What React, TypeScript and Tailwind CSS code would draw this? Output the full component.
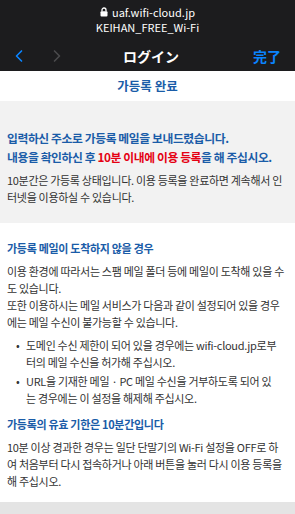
import { ChevronLeft, ChevronRight } from 'lucide-react';

const font = { fontFamily: '"Noto Sans CJK KR", "Noto Sans", sans-serif' };

function LockIcon() {
  return (
    <svg width="8" height="10" viewBox="0 0 8 10" className="text-white">
      <path d="M2 4.5V3a2 2 0 0 1 4 0v1.5" fill="none" stroke="currentColor" strokeWidth="1.3" />
      <rect x="0.5" y="4.3" width="7" height="5.2" rx="1" fill="currentColor" />
    </svg>
  );
}

export default function App() {
  return (
    <div className="w-[295px] h-[514px] overflow-hidden bg-white" style={font}>
      {/* browser chrome */}
      <div className="h-[71px] bg-[#1c1c1e] flex flex-col items-center text-white">
        <div className="mt-[5px] flex items-center gap-[4px] text-[11px] leading-[14px]">
          <LockIcon />
          <span>uaf.wifi-cloud.jp</span>
        </div>
        <div className="text-[11px] leading-[14px] mt-[1px]">KEIHAN_FREE_Wi-Fi</div>
        <div className="w-full flex items-center mt-[12px] h-[20px] px-[9px]">
          <ChevronLeft size={20} strokeWidth={2} className="text-[#0a84ff]" />
          <ChevronRight size={20} strokeWidth={2} className="text-[#4a4a4c] ml-[18px]" />
          <div className="flex-1 text-center text-[14px] font-bold pr-[18px]">ログイン</div>
          <div className="text-[14px] font-bold text-[#0a84ff] mr-[5px]">完了</div>
        </div>
      </div>

      {/* page header */}
      <div className="h-[30px] flex items-center justify-center">
        <span className="text-[12.5px] font-bold text-[#1a5ca8]">가등록 완료</span>
      </div>

      {/* notice box */}
      <div className="bg-[#f2f2f2] h-[122px] px-[7px] pt-[27px] whitespace-nowrap">
        <p className="text-[11.8px] leading-[19px] font-bold text-[#1a5ca8] tracking-[-0.4px]">
          입력하신 주소로 가등록 메일을 보내드렸습니다.
          <br />
          내용을 확인하신 후 <span className="text-[#e50012]">10분 이내에 이용 등록</span>을 해 주십시오.
        </p>
        <p className="mt-[6px] text-[11px] leading-[17px] text-[#333] tracking-[-0.3px]">
          10분간은 가등록 상태입니다. 이용 등록을 완료하면 계속해서 인
          <br />
          터넷을 이용하실 수 있습니다.
        </p>
      </div>

      {/* details */}
      <div className="h-[279px] px-[7px] pt-[17px] whitespace-nowrap text-[#333] tracking-[-0.3px] text-[11px] leading-[17px]">
        <h2 className="font-bold text-[#1a5ca8]">가등록 메일이 도착하지 않을 경우</h2>
        <p className="mt-[6px]">
          이용 환경에 따라서는 스팸 메일 폴더 등에 메일이 도착해 있을 수
          <br />
          도 있습니다.
          <br />
          또한 이용하시는 메일 서비스가 다음과 같이 설정되어 있을 경우
          <br />
          에는 메일 수신이 불가능할 수 있습니다.
        </p>
        <ul className="mt-[6px] flex flex-col gap-[2px]">
          <li className="flex">
            <span className="w-[19px] pl-[9px]">•</span>
            <span>
              도메인 수신 제한이 되어 있을 경우에는 wifi-cloud.jp로부
              <br />
              터의 메일 수신을 허가해 주십시오.
            </span>
          </li>
          <li className="flex">
            <span className="w-[19px] pl-[9px]">•</span>
            <span>
              URL을 기재한 메일 · PC 메일 수신을 거부하도록 되어 있
              <br />
              는 경우에는 이 설정을 해제해 주십시오.
            </span>
          </li>
        </ul>
        <h2 className="mt-[9px] font-bold text-[#1a5ca8]">가등록의 유효 기한은 10분간입니다</h2>
        <p className="mt-[6px]">
          10분 이상 경과한 경우는 일단 단말기의 Wi-Fi 설정을 OFF로 하
          <br />
          여 처음부터 다시 접속하거나 아래 버튼을 눌러 다시 이용 등록을
          <br />
          해 주십시오.
        </p>
      </div>
      <div className="h-[12px] bg-[#e4e4e4]" />
    </div>
  );
}
